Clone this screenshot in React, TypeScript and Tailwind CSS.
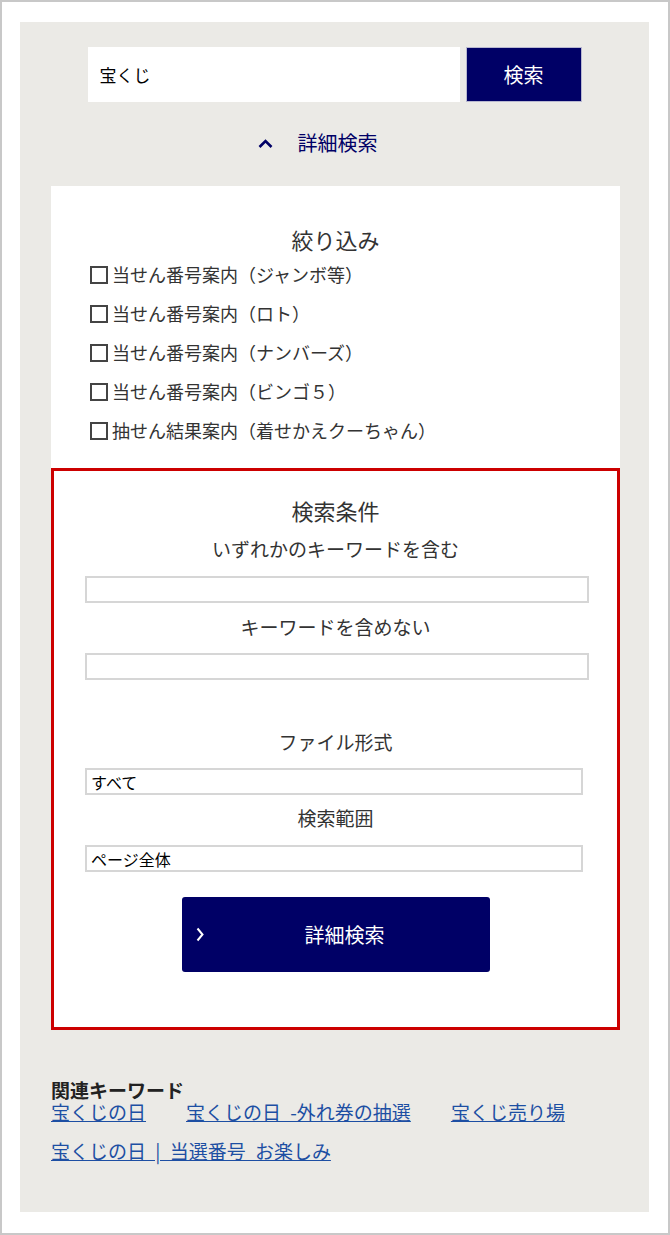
const jp = { fontFamily: '"Noto Sans CJK JP", "Noto Sans", sans-serif' };

const filters = [
  "当せん番号案内（ジャンボ等）",
  "当せん番号案内（ロト）",
  "当せん番号案内（ナンバーズ）",
  "当せん番号案内（ビンゴ５）",
  "抽せん結果案内（着せかえクーちゃん）",
];

const links = ["宝くじの日", "宝くじの日 -外れ券の抽選", "宝くじ売り場", "宝くじの日 | 当選番号 お楽しみ"];

function Label({ children, className = "" }: { children: React.ReactNode; className?: string }) {
  return <p className={`text-center text-[19px] leading-[28px] text-[#333] ${className}`}>{children}</p>;
}

export default function App() {
  return (
    <div
      style={jp}
      className="h-[1235px] w-[670px] border-2 border-[#c8c8c8] bg-white pb-[21px] pl-[18px] pr-[19px] pt-[20px]"
    >
      <div className="flex h-full flex-col bg-[#ebeae6] pl-[31px] pr-[29px] pt-[25px]">
        {/* search bar */}
        <div className="flex justify-center gap-[6px] pr-[2px]">
          <div className="flex h-[55px] w-[372px] items-center bg-white pl-[12px] text-[17px] text-black">宝くじ</div>
          <button className="h-[55px] w-[116px] border border-[#b8b8d0] bg-[#000066] text-[20px] text-white">検索</button>
        </div>

        <div className="mb-[31px] mt-[29px] flex items-center justify-center gap-[25px] pr-[36px] text-[20px] leading-[24px] text-[#000066]">
          <svg width="15" height="9" viewBox="0 0 15 9" fill="none">
            <path d="M1.5 8 L7.5 2 L13.5 8" stroke="#000066" strokeWidth="2.6" />
          </svg>
          <span>詳細検索</span>
        </div>

        {/* card */}
        <div className="bg-white">
          <div className="pb-[18px] pt-[38px]">
            <p className="text-center text-[22px] leading-[30px] text-[#333]">絞り込み</p>
            <ul className="mt-[1px] pl-[39px]">
              {filters.map((f) => (
                <li key={f} className="flex h-[39px] items-center text-[18px] text-[#333]">
                  <span className="mr-[4px] h-[18px] w-[18px] border-2 border-[#444]" />
                  {f}
                </li>
              ))}
            </ul>
          </div>

          <div className="border-[3px] border-[#cc0000] pb-[55px] pt-[24px]">
            <p className="text-center text-[22px] leading-[30px] text-[#333]">検索条件</p>
            <Label className="mt-[10px]">いずれかのキーワードを含む</Label>
            <div className="ml-[31px] mt-[13px] h-[27px] w-[504px] border-2 border-[#d6d6d6]" />
            <Label className="mt-[10px]">キーワードを含めない</Label>
            <div className="ml-[31px] mt-[12px] h-[27px] w-[504px] border-2 border-[#d6d6d6]" />

            <Label className="mt-[48px]">ファイル形式</Label>
            <div className="ml-[31px] mt-[12px] flex h-[27px] w-[498px] items-center border-2 border-[#d6d6d6] pl-[4px] text-[16px] text-black">
              すべて
            </div>
            <Label className="mt-[9px]">検索範囲</Label>
            <div className="ml-[31px] mt-[13px] flex h-[27px] w-[498px] items-center border-2 border-[#d6d6d6] pl-[4px] text-[16px] text-black">
              ページ全体
            </div>

            <div className="mt-[25px] flex justify-center">
              <button className="flex h-[75px] w-[308px] items-center rounded-[3px] bg-[#000066] pl-[14px] pr-[4px] text-[20px] text-white">
                <svg width="8" height="15" viewBox="0 0 8 15" fill="none">
                  <path d="M1.5 1.5 L6.5 7.5 L1.5 13.5" stroke="white" strokeWidth="2" />
                </svg>
                <span className="flex-1 text-center">詳細検索</span>
              </button>
            </div>
          </div>
        </div>

        {/* related keywords */}
        <p className="mt-[50px] text-[19px] font-bold leading-[20px] text-[#222]">関連キーワード</p>
        <div className="mt-[1px] flex flex-wrap gap-x-[40px] gap-y-[17px] text-[19px] leading-[22px] [word-spacing:5px]">
          {links.map((l) => (
            <a key={l} href="#" className="text-[#1d4fa3] underline">
              {l}
            </a>
          ))}
        </div>
      </div>
    </div>
  );
}
